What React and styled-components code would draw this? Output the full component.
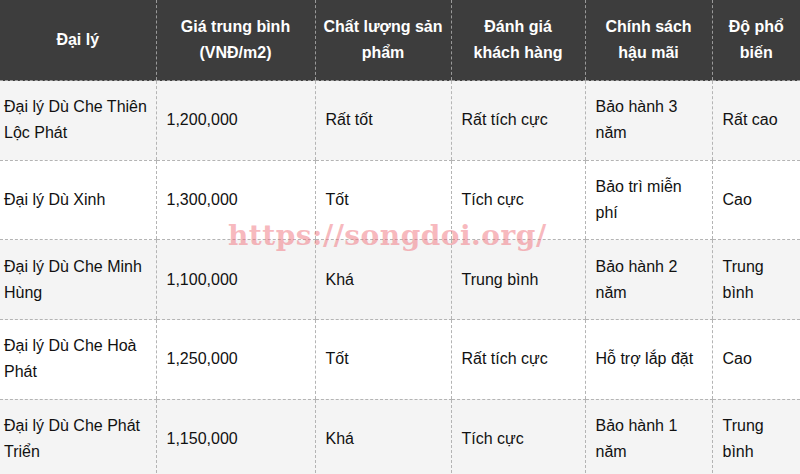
import React from "react";
import styled, { createGlobalStyle } from "styled-components";

const Global = createGlobalStyle`
  html, body { margin: 0; padding: 0; background: #ffffff; }
  body { font-family: Arial, "Liberation Sans", sans-serif; }
`;

const Wrap = styled.div`
  position: relative;
  width: 800px;
  height: 474px;
  overflow: hidden;
  background: #fff;
`;

const Table = styled.table`
  width: 800px;
  border-collapse: collapse;
  table-layout: fixed;
  font-family: Arial, "Liberation Sans", sans-serif;
  font-size: 16px;
  line-height: 26px;
  color: #111;
`;

const Th = styled.th`
  height: 80px;
  padding: 0 8px;
  background: #3d3d3d;
  color: #ffffff;
  font-weight: bold;
  text-align: center;
  vertical-align: middle;
  border-left: 1px dashed #9a9a9a;
  border-bottom: 1px dashed #9a9a9a;
  &:first-child { border-left: none; }
`;

const Row = styled.tr`
  background: ${(p) => (p.$alt ? "#f4f4f4" : "#ffffff")};
`;

const Td = styled.td`
  height: 78.7px;
  padding: 0 8px 0 ${(p) => (p.$first ? "4px" : "10px")};
  vertical-align: middle;
  text-align: left;
  border-left: ${(p) => (p.$first ? "none" : "1px dashed #b4b4b4")};
  border-bottom: 1px dashed #b4b4b4;
`;

const Watermark = styled.div`
  position: absolute;
  left: 228px;
  top: 218px;
  font-family: "DejaVu Serif", "Liberation Serif", serif;
  font-weight: bold;
  font-size: 28px;
  line-height: 36px;
  letter-spacing: 0.5px;
  color: rgba(240, 115, 125, 0.5);
  pointer-events: none;
  white-space: nowrap;
`;

const widths = [156, 159, 136, 134, 127, 88];
const headers = [
  "Đại lý",
  "Giá trung bình (VNĐ/m2)",
  "Chất lượng sản phẩm",
  "Đánh giá khách hàng",
  "Chính sách hậu mãi",
  "Độ phổ biến",
];
const rows = [
  ["Đại lý Dù Che Thiên Lộc Phát", "1,200,000", "Rất tốt", "Rất tích cực", "Bảo hành 3 năm", "Rất cao"],
  ["Đại lý Dù Xinh", "1,300,000", "Tốt", "Tích cực", "Bảo trì miễn phí", "Cao"],
  ["Đại lý Dù Che Minh Hùng", "1,100,000", "Khá", "Trung bình", "Bảo hành 2 năm", "Trung bình"],
  ["Đại lý Dù Che Hoà Phát", "1,250,000", "Tốt", "Rất tích cực", "Hỗ trợ lắp đặt", "Cao"],
  ["Đại lý Dù Che Phát Triển", "1,150,000", "Khá", "Tích cực", "Bảo hành 1 năm", "Trung bình"],
];

export default function App() {
  return (
    <Wrap>
      <Global />
      <Table>
        <colgroup>
          {widths.map((w, i) => (
            <col key={i} style={{ width: w }} />
          ))}
        </colgroup>
        <thead>
          <tr>
            {headers.map((h) => (
              <Th key={h}>{h}</Th>
            ))}
          </tr>
        </thead>
        <tbody>
          {rows.map((r, i) => (
            <Row key={i} $alt={i % 2 === 0}>
              {r.map((c, j) => (
                <Td key={j} $first={j === 0}>
                  {c}
                </Td>
              ))}
            </Row>
          ))}
        </tbody>
      </Table>
      <Watermark>https://songdoi.org/</Watermark>
    </Wrap>
  );
}
